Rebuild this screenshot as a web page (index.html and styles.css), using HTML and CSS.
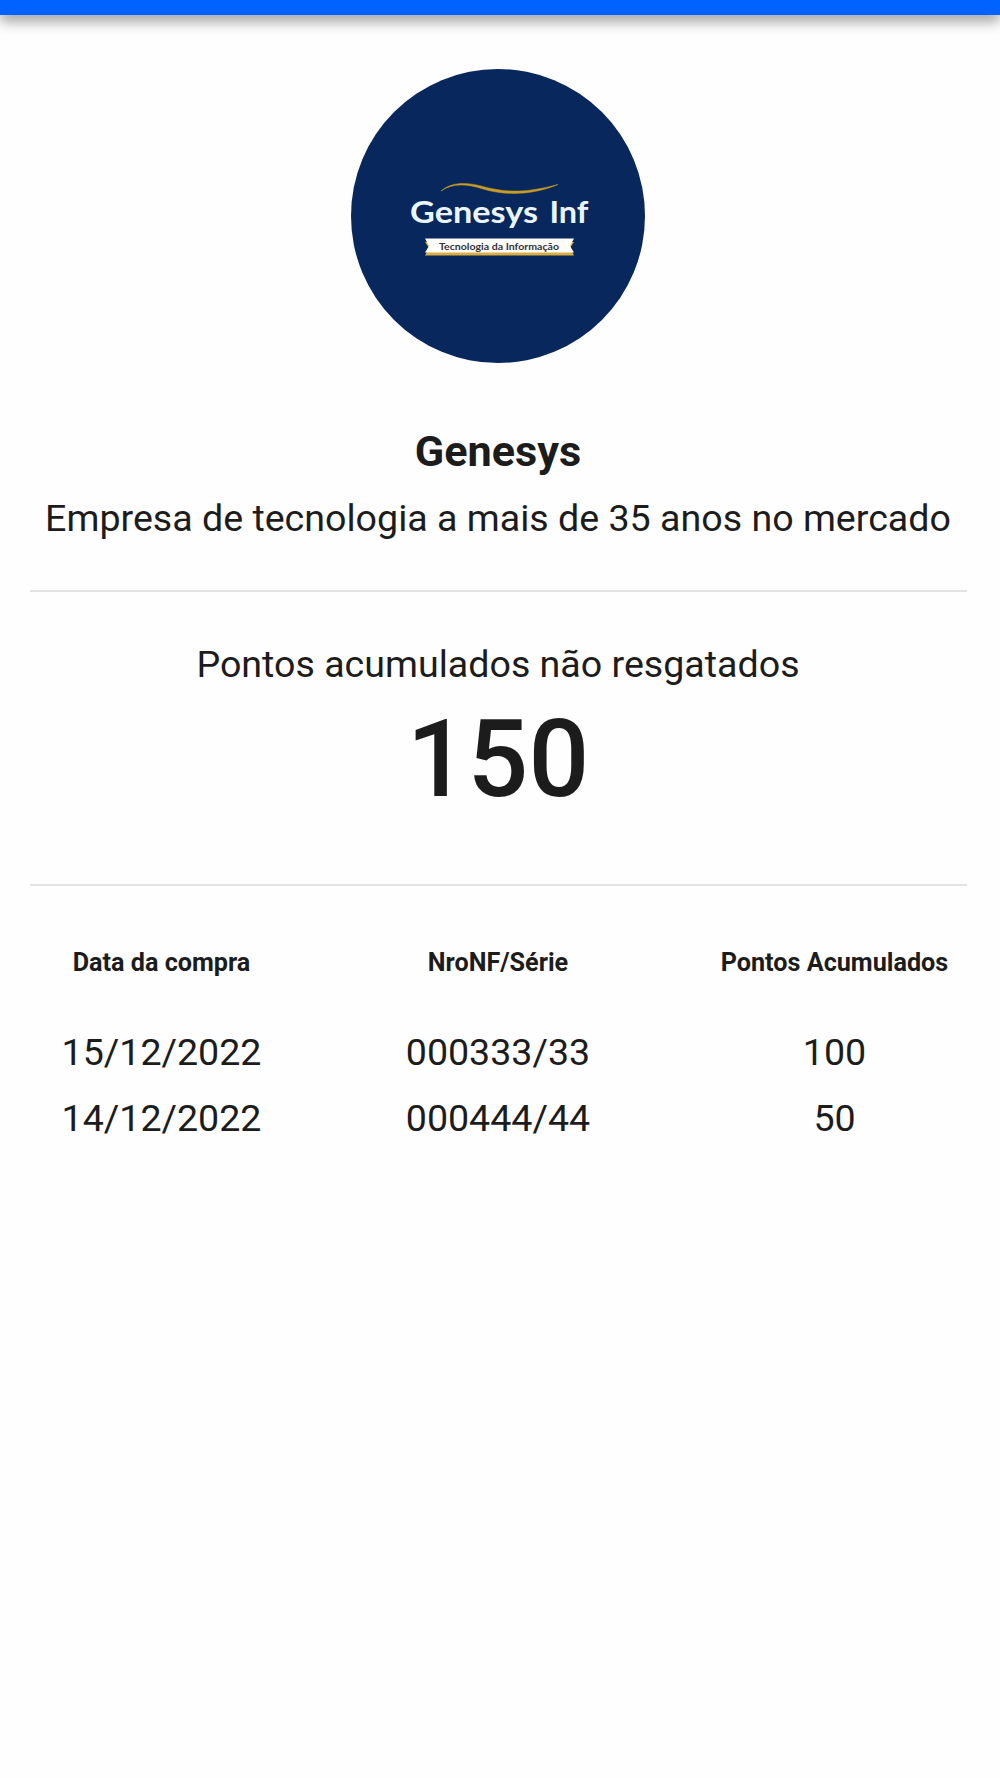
FILE: index.html
```html
<!DOCTYPE html>
<html lang="pt-BR">
<head>
    <meta charset="UTF-8">
    <meta name="viewport" content="width=device-width, initial-scale=1.0">
    <title>Genesys</title>
    <link rel="stylesheet" href="styles.css">
</head>
<body>
    <header class="top-bar"></header>

    <main class="content">
        <svg class="logo" viewBox="0 0 294 294" role="img" aria-label="Genesys Inf">
            <circle cx="147" cy="147" r="147" fill="#07275d" />
            <path d="M90 122 C100 113 115 113 130 117 C155 124 175 124 207 115.500 C182 126 155 127 132 120 C115 114.500 102 114 90 122 Z" fill="#c99c25" stroke="#c99c25" stroke-width="0.500" />
            <text class="logo-name" x="59" y="154" textLength="128" lengthAdjust="spacingAndGlyphs">Genesys</text>
            <text class="logo-name" x="198.500" y="154" textLength="39" lengthAdjust="spacingAndGlyphs">Inf</text>
            <path d="M74 173 H223 L219 179 L223 186.500 H74 L78 179 Z" fill="#d9ae45" />
            <path d="M74 169.500 H223 L219 177 L223 183.500 H74 L78 177 Z" fill="#fffdf8" />
            <text class="logo-tag" x="88" y="180.500" textLength="120" lengthAdjust="spacingAndGlyphs">Tecnologia da Informação</text>
        </svg>

        <section class="company">
            <h1 class="name">Genesys</h1>
            <p class="text">Empresa de tecnologia a mais de 35 anos no mercado</p>
        </section>

        <section class="points">
            <p class="text">Pontos acumulados não resgatados</p>
            <p class="total">150</p>
        </section>

        <section class="history">
            <div class="row row-head">
                <span>Data da compra</span>
                <span>NroNF/Série</span>
                <span>Pontos Acumulados</span>
            </div>
            <div class="row">
                <span>15/12/2022</span>
                <span>000333/33</span>
                <span>100</span>
            </div>
            <div class="row">
                <span>14/12/2022</span>
                <span>000444/44</span>
                <span>50</span>
            </div>
        </section>
    </main>
</body>
</html>
```
FILE: styles.css
```css
:root {
    --blue: #0062ff;
    --ink: #1c1c1c;
    --line: #e3e3e3;
}

* {
    box-sizing: border-box;
}

body {
    margin: 0;
    min-height: 100vh;
    background: #fefefe;
    color: var(--ink);
    font-family: Roboto, sans-serif;
    font-size: 37.6px;
}

h1,
p {
    margin: 0;
}

.top-bar {
    height: 15px;
    background: var(--blue);
    box-shadow: 0 6px 14px rgba(0, 0, 0, 0.4);
}

.content {
    display: flex;
    flex-direction: column;
    padding: 54px 33px 0 30px;
    text-align: center;
}

.logo {
    width: 294px;
    height: 294px;
    align-self: center;
    margin-right: 1px;
}

.logo-name {
    font-family: Lato, sans-serif;
    font-size: 29.5px;
    font-weight: 700;
    fill: #eaf5ff;
}

.logo-tag {
    font-family: Lato, sans-serif;
    font-size: 9px;
    font-weight: 700;
    fill: #33343c;
}

.company {
    height: 229px;
    padding-top: 64px;
    padding-right: 1px;
    border-bottom: 2px solid var(--line);
}

.name {
    font-size: 43.2px;
    font-weight: 700;
    line-height: 50px;
}

.text {
    line-height: 66px;
    white-space: nowrap;
}

.company .text {
    margin-top: 8px;
}

.points {
    height: 294px;
    padding-top: 39px;
    padding-right: 1px;
    border-bottom: 2px solid var(--line);
}

.total {
    font-size: 107px;
    font-weight: 500;
    line-height: 126px;
}

.history {
    padding-top: 44px;
    padding-right: 1px;
}

.row {
    display: grid;
    grid-template-columns: repeat(3, 263px);
    justify-content: space-between;
    line-height: 65.4px;
    white-space: nowrap;
}

.row-head {
    margin-bottom: 25px;
    font-size: 25.2px;
    font-weight: 700;
}
```
